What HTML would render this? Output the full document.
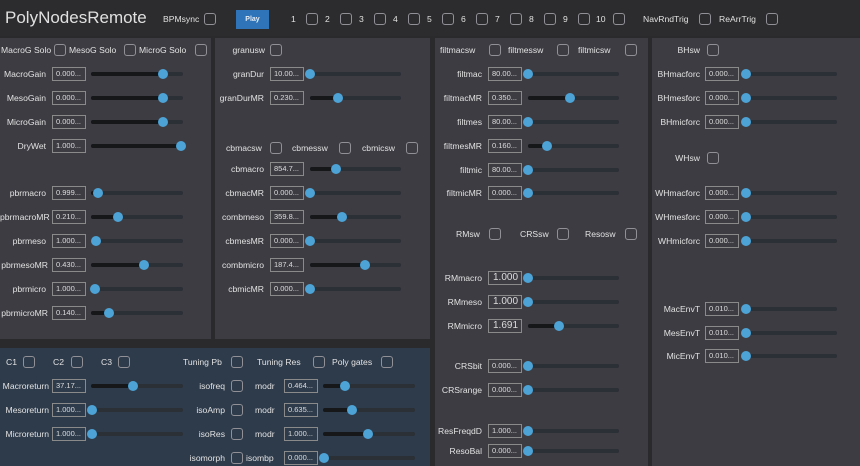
<!DOCTYPE html>
<html><head><meta charset="utf-8"><style>
*{box-sizing:border-box;margin:0;padding:0}
body{width:860px;height:466px;background:#2a2a2c;position:relative;overflow:hidden;font-family:"Liberation Sans",sans-serif;color:#e2e2e2}
div{position:absolute}
.p{background:#3c3c42}
.l{font-size:8.6px;line-height:12px;white-space:nowrap;text-align:right}
.t{font-size:8.6px;line-height:12px;white-space:nowrap}
.cb{width:12px;height:12px;border:1px solid #909096;border-radius:3px}
.bx{width:34px;height:14px;border:1px solid #8a8a8a;font-size:7.5px;line-height:12px;padding-left:3px;color:#ddd}
.bx.b{font-size:10px;padding-left:4px}
.sl{height:4px;background:#2b2f36;border-radius:2px}
.f{height:4px;background:#161719;border-radius:2px;left:0;top:0}
.k{width:10px;height:10px;border-radius:50%;background:#4da3d6;top:-3px}
</style></head><body>
<div style="left:0;top:0;width:860px;height:36px;background:#2c2c2e"></div>
<div style="left:5px;top:8px;font-size:17px;color:#e0e0e0">PolyNodesRemote</div>
<div class="t" style="left:163px;top:13px">BPMsync</div><div class="cb" style="left:204px;top:13px"></div>
<div style="left:236px;top:10px;width:33px;height:19px;background:#2f73b8;font-size:7px;font-weight:bold;text-align:center;line-height:19px;color:#e8eef5">Play</div>
<div class="t" style="left:291px;top:13px">1</div><div class="cb" style="left:306px;top:13px"></div>
<div class="t" style="left:325px;top:13px">2</div><div class="cb" style="left:340px;top:13px"></div>
<div class="t" style="left:359px;top:13px">3</div><div class="cb" style="left:374px;top:13px"></div>
<div class="t" style="left:393px;top:13px">4</div><div class="cb" style="left:408px;top:13px"></div>
<div class="t" style="left:427px;top:13px">5</div><div class="cb" style="left:442px;top:13px"></div>
<div class="t" style="left:461px;top:13px">6</div><div class="cb" style="left:476px;top:13px"></div>
<div class="t" style="left:495px;top:13px">7</div><div class="cb" style="left:510px;top:13px"></div>
<div class="t" style="left:529px;top:13px">8</div><div class="cb" style="left:544px;top:13px"></div>
<div class="t" style="left:563px;top:13px">9</div><div class="cb" style="left:578px;top:13px"></div>
<div class="t" style="left:596px;top:13px">10</div><div class="cb" style="left:613px;top:13px"></div>
<div class="t" style="left:643px;top:13px">NavRndTrig</div><div class="cb" style="left:699px;top:13px"></div>
<div class="t" style="left:719px;top:13px">ReArrTrig</div><div class="cb" style="left:766px;top:13px"></div>

<div class="p" style="left:0;top:38px;width:211px;height:301px"></div>
<div class="p" style="left:215px;top:38px;width:215px;height:301px"></div>
<div class="p" style="left:435px;top:38px;width:213px;height:428px"></div>
<div class="p" style="left:652px;top:38px;width:208px;height:428px"></div>
<div style="left:0;top:348px;width:430px;height:118px;background:#2e3b4b"></div>

<div class="t" style="left:1px;top:44px">MacroG Solo</div><div class="cb" style="left:54px;top:44px"></div>
<div class="t" style="left:69px;top:44px">MesoG Solo</div><div class="cb" style="left:124px;top:44px"></div>
<div class="t" style="left:139px;top:44px">MicroG Solo</div><div class="cb" style="left:195px;top:44px"></div>

<div class="l" style="left:0;width:46px;top:68px">MacroGain</div><div class="bx" style="left:52px;top:67px">0.000...</div><div class="sl" style="left:91px;top:72px;width:92px"><div class="f" style="width:72px"></div><div class="k" style="left:67px"></div></div>
<div class="l" style="left:0;width:46px;top:92px">MesoGain</div><div class="bx" style="left:52px;top:91px">0.000...</div><div class="sl" style="left:91px;top:96px;width:92px"><div class="f" style="width:72px"></div><div class="k" style="left:67px"></div></div>
<div class="l" style="left:0;width:46px;top:116px">MicroGain</div><div class="bx" style="left:52px;top:115px">0.000...</div><div class="sl" style="left:91px;top:120px;width:92px"><div class="f" style="width:72px"></div><div class="k" style="left:67px"></div></div>
<div class="l" style="left:0;width:46px;top:140px">DryWet</div><div class="bx" style="left:52px;top:139px">1.000...</div><div class="sl" style="left:91px;top:144px;width:92px"><div class="f" style="width:90px"></div><div class="k" style="left:85px"></div></div>

<div class="l" style="left:0;width:46px;top:187px">pbrmacro</div><div class="bx" style="left:52px;top:186px">0.999...</div><div class="sl" style="left:91px;top:191px;width:92px"><div class="f" style="width:7px"></div><div class="k" style="left:2px"></div></div>
<div class="l" style="left:0;width:48px;top:211px">pbrmacroMR</div><div class="bx" style="left:52px;top:210px">0.210...</div><div class="sl" style="left:91px;top:215px;width:92px"><div class="f" style="width:27px"></div><div class="k" style="left:22px"></div></div>
<div class="l" style="left:0;width:46px;top:235px">pbrmeso</div><div class="bx" style="left:52px;top:234px">1.000...</div><div class="sl" style="left:91px;top:239px;width:92px"><div class="k" style="left:0px"></div></div>
<div class="l" style="left:0;width:48px;top:259px">pbrmesoMR</div><div class="bx" style="left:52px;top:258px">0.430...</div><div class="sl" style="left:91px;top:263px;width:92px"><div class="f" style="width:53px"></div><div class="k" style="left:48px"></div></div>
<div class="l" style="left:0;width:46px;top:283px">pbrmicro</div><div class="bx" style="left:52px;top:282px">1.000...</div><div class="sl" style="left:91px;top:287px;width:92px"><div class="k" style="left:-1px"></div></div>
<div class="l" style="left:0;width:48px;top:307px">pbrmicroMR</div><div class="bx" style="left:52px;top:306px">0.140...</div><div class="sl" style="left:91px;top:311px;width:92px"><div class="f" style="width:18px"></div><div class="k" style="left:13px"></div></div>

<div class="l" style="left:215px;width:50px;top:44px">granusw</div><div class="cb" style="left:270px;top:44px"></div>
<div class="l" style="left:215px;width:49px;top:68px">granDur</div><div class="bx" style="left:270px;top:67px">10.00...</div><div class="sl" style="left:310px;top:72px;width:91px"><div class="k" style="left:-5px"></div></div>
<div class="l" style="left:215px;width:49px;top:92px">granDurMR</div><div class="bx" style="left:270px;top:91px">0.230...</div><div class="sl" style="left:310px;top:96px;width:91px"><div class="f" style="width:28px"></div><div class="k" style="left:23px"></div></div>

<div class="t" style="left:226px;top:142px">cbmacsw</div><div class="cb" style="left:270px;top:142px"></div>
<div class="t" style="left:292px;top:142px">cbmessw</div><div class="cb" style="left:339px;top:142px"></div>
<div class="t" style="left:362px;top:142px">cbmicsw</div><div class="cb" style="left:406px;top:142px"></div>

<div class="l" style="left:215px;width:49px;top:163px">cbmacro</div><div class="bx" style="left:270px;top:162px">854.7...</div><div class="sl" style="left:310px;top:167px;width:91px"><div class="f" style="width:26px"></div><div class="k" style="left:21px"></div></div>
<div class="l" style="left:215px;width:49px;top:187px">cbmacMR</div><div class="bx" style="left:270px;top:186px">0.000...</div><div class="sl" style="left:310px;top:191px;width:91px"><div class="k" style="left:-5px"></div></div>
<div class="l" style="left:215px;width:49px;top:211px">combmeso</div><div class="bx" style="left:270px;top:210px">359.8...</div><div class="sl" style="left:310px;top:215px;width:91px"><div class="f" style="width:32px"></div><div class="k" style="left:27px"></div></div>
<div class="l" style="left:215px;width:49px;top:235px">cbmesMR</div><div class="bx" style="left:270px;top:234px">0.000...</div><div class="sl" style="left:310px;top:239px;width:91px"><div class="k" style="left:-5px"></div></div>
<div class="l" style="left:215px;width:49px;top:259px">combmicro</div><div class="bx" style="left:270px;top:258px">187.4...</div><div class="sl" style="left:310px;top:263px;width:91px"><div class="f" style="width:55px"></div><div class="k" style="left:50px"></div></div>
<div class="l" style="left:215px;width:49px;top:283px">cbmicMR</div><div class="bx" style="left:270px;top:282px">0.000...</div><div class="sl" style="left:310px;top:287px;width:91px"><div class="k" style="left:-5px"></div></div>

<div class="t" style="left:6px;top:356px">C1</div><div class="cb" style="left:23px;top:356px"></div>
<div class="t" style="left:53px;top:356px">C2</div><div class="cb" style="left:71px;top:356px"></div>
<div class="t" style="left:101px;top:356px">C3</div><div class="cb" style="left:118px;top:356px"></div>
<div class="t" style="left:183px;top:356px">Tuning Pb</div><div class="cb" style="left:231px;top:356px"></div>
<div class="t" style="left:257px;top:356px">Tuning Res</div><div class="cb" style="left:313px;top:356px"></div>
<div class="t" style="left:332px;top:356px">Poly gates</div><div class="cb" style="left:381px;top:356px"></div>

<div class="l" style="left:0;width:49px;top:380px">Macroreturn</div><div class="bx" style="left:52px;top:379px">37.17...</div><div class="sl" style="left:91px;top:384px;width:92px"><div class="f" style="width:42px"></div><div class="k" style="left:37px"></div></div>
<div class="l" style="left:0;width:49px;top:404px">Mesoreturn</div><div class="bx" style="left:52px;top:403px">1.000...</div><div class="sl" style="left:91px;top:408px;width:92px"><div class="k" style="left:-4px"></div></div>
<div class="l" style="left:0;width:49px;top:428px">Microreturn</div><div class="bx" style="left:52px;top:427px">1.000...</div><div class="sl" style="left:91px;top:432px;width:92px"><div class="k" style="left:-4px"></div></div>

<div class="l" style="left:160px;width:65px;top:380px">isofreq</div><div class="cb" style="left:231px;top:380px"></div>
<div class="l" style="left:160px;width:65px;top:404px">isoAmp</div><div class="cb" style="left:231px;top:404px"></div>
<div class="l" style="left:160px;width:65px;top:428px">isoRes</div><div class="cb" style="left:231px;top:428px"></div>
<div class="l" style="left:150px;width:75px;top:452px">isomorph</div><div class="cb" style="left:231px;top:452px"></div>
<div class="t" style="left:255px;top:380px">modr</div><div class="bx" style="left:284px;top:379px">0.464...</div><div class="sl" style="left:323px;top:384px;width:92px"><div class="f" style="width:22px"></div><div class="k" style="left:17px"></div></div>
<div class="t" style="left:255px;top:404px">modr</div><div class="bx" style="left:284px;top:403px">0.635...</div><div class="sl" style="left:323px;top:408px;width:92px"><div class="f" style="width:29px"></div><div class="k" style="left:24px"></div></div>
<div class="t" style="left:255px;top:428px">modr</div><div class="bx" style="left:284px;top:427px">1.000...</div><div class="sl" style="left:323px;top:432px;width:92px"><div class="f" style="width:45px"></div><div class="k" style="left:40px"></div></div>
<div class="t" style="left:246px;top:452px">isombp</div><div class="bx" style="left:284px;top:451px">0.000...</div><div class="sl" style="left:323px;top:456px;width:92px"><div class="k" style="left:-4px"></div></div>

<div class="t" style="left:440px;top:44px">filtmacsw</div><div class="cb" style="left:489px;top:44px"></div>
<div class="t" style="left:508px;top:44px">filtmessw</div><div class="cb" style="left:557px;top:44px"></div>
<div class="t" style="left:578px;top:44px">filtmicsw</div><div class="cb" style="left:625px;top:44px"></div>

<div class="l" style="left:430px;width:52px;top:68px">filtmac</div><div class="bx" style="left:488px;top:67px">80.00...</div><div class="sl" style="left:528px;top:72px;width:91px"><div class="k" style="left:-5px"></div></div>
<div class="l" style="left:430px;width:52px;top:92px">filtmacMR</div><div class="bx" style="left:488px;top:91px">0.350...</div><div class="sl" style="left:528px;top:96px;width:91px"><div class="f" style="width:42px"></div><div class="k" style="left:37px"></div></div>
<div class="l" style="left:430px;width:52px;top:116px">filtmes</div><div class="bx" style="left:488px;top:115px">80.00...</div><div class="sl" style="left:528px;top:120px;width:91px"><div class="k" style="left:-5px"></div></div>
<div class="l" style="left:430px;width:52px;top:140px">filtmesMR</div><div class="bx" style="left:488px;top:139px">0.160...</div><div class="sl" style="left:528px;top:144px;width:91px"><div class="f" style="width:19px"></div><div class="k" style="left:14px"></div></div>
<div class="l" style="left:430px;width:52px;top:164px">filtmic</div><div class="bx" style="left:488px;top:163px">80.00...</div><div class="sl" style="left:528px;top:168px;width:91px"><div class="k" style="left:-5px"></div></div>
<div class="l" style="left:430px;width:52px;top:187px">filtmicMR</div><div class="bx" style="left:488px;top:186px">0.000...</div><div class="sl" style="left:528px;top:191px;width:91px"><div class="k" style="left:-5px"></div></div>

<div class="t" style="left:456px;top:228px">RMsw</div><div class="cb" style="left:489px;top:228px"></div>
<div class="t" style="left:520px;top:228px">CRSsw</div><div class="cb" style="left:557px;top:228px"></div>
<div class="t" style="left:585px;top:228px">Resosw</div><div class="cb" style="left:625px;top:228px"></div>

<div class="l" style="left:430px;width:52px;top:272px">RMmacro</div><div class="bx b" style="left:488px;top:271px">1.000</div><div class="sl" style="left:528px;top:276px;width:91px"><div class="k" style="left:-5px"></div></div>
<div class="l" style="left:430px;width:52px;top:296px">RMmeso</div><div class="bx b" style="left:488px;top:295px">1.000</div><div class="sl" style="left:528px;top:300px;width:91px"><div class="k" style="left:-5px"></div></div>
<div class="l" style="left:430px;width:52px;top:320px">RMmicro</div><div class="bx b" style="left:488px;top:319px">1.691</div><div class="sl" style="left:528px;top:324px;width:91px"><div class="f" style="width:31px"></div><div class="k" style="left:26px"></div></div>

<div class="l" style="left:430px;width:52px;top:360px">CRSbit</div><div class="bx" style="left:488px;top:359px">0.000...</div><div class="sl" style="left:528px;top:364px;width:91px"><div class="k" style="left:-5px"></div></div>
<div class="l" style="left:430px;width:52px;top:384px">CRSrange</div><div class="bx" style="left:488px;top:383px">0.000...</div><div class="sl" style="left:528px;top:388px;width:91px"><div class="k" style="left:-5px"></div></div>
<div class="l" style="left:430px;width:52px;top:425px">ResFreqdD</div><div class="bx" style="left:488px;top:424px">1.000...</div><div class="sl" style="left:528px;top:429px;width:91px"><div class="k" style="left:-5px"></div></div>
<div class="l" style="left:430px;width:52px;top:445px">ResoBal</div><div class="bx" style="left:488px;top:444px">0.000...</div><div class="sl" style="left:528px;top:449px;width:91px"><div class="k" style="left:-5px"></div></div>

<div class="l" style="left:652px;width:48px;top:44px">BHsw</div><div class="cb" style="left:707px;top:44px"></div>
<div class="l" style="left:652px;width:48px;top:68px">BHmacforc</div><div class="bx" style="left:705px;top:67px">0.000...</div><div class="sl" style="left:746px;top:72px;width:91px"><div class="k" style="left:-5px"></div></div>
<div class="l" style="left:652px;width:48px;top:92px">BHmesforc</div><div class="bx" style="left:705px;top:91px">0.000...</div><div class="sl" style="left:746px;top:96px;width:91px"><div class="k" style="left:-5px"></div></div>
<div class="l" style="left:652px;width:48px;top:116px">BHmicforc</div><div class="bx" style="left:705px;top:115px">0.000...</div><div class="sl" style="left:746px;top:120px;width:91px"><div class="k" style="left:-5px"></div></div>
<div class="l" style="left:652px;width:48px;top:152px">WHsw</div><div class="cb" style="left:707px;top:152px"></div>
<div class="l" style="left:652px;width:48px;top:187px">WHmacforc</div><div class="bx" style="left:705px;top:186px">0.000...</div><div class="sl" style="left:746px;top:191px;width:91px"><div class="k" style="left:-5px"></div></div>
<div class="l" style="left:652px;width:48px;top:211px">WHmesforc</div><div class="bx" style="left:705px;top:210px">0.000...</div><div class="sl" style="left:746px;top:215px;width:91px"><div class="k" style="left:-5px"></div></div>
<div class="l" style="left:652px;width:48px;top:235px">WHmicforc</div><div class="bx" style="left:705px;top:234px">0.000...</div><div class="sl" style="left:746px;top:239px;width:91px"><div class="k" style="left:-5px"></div></div>
<div class="l" style="left:652px;width:48px;top:303px">MacEnvT</div><div class="bx" style="left:705px;top:302px">0.010...</div><div class="sl" style="left:746px;top:307px;width:91px"><div class="k" style="left:-5px"></div></div>
<div class="l" style="left:652px;width:48px;top:327px">MesEnvT</div><div class="bx" style="left:705px;top:326px">0.010...</div><div class="sl" style="left:746px;top:331px;width:91px"><div class="k" style="left:-5px"></div></div>
<div class="l" style="left:652px;width:48px;top:350px">MicEnvT</div><div class="bx" style="left:705px;top:349px">0.010...</div><div class="sl" style="left:746px;top:354px;width:91px"><div class="k" style="left:-5px"></div></div>
</body></html>
